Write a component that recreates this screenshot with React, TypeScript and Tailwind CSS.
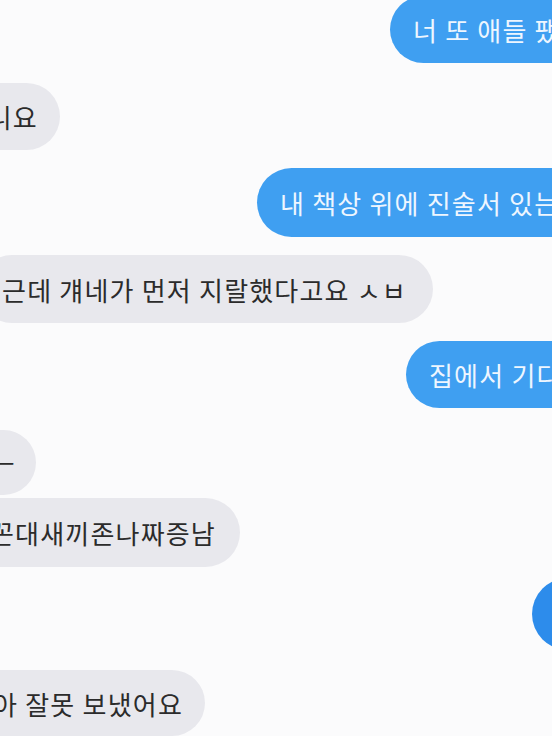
import React from "react";

const font = { fontFamily: '"Noto Sans CJK KR", "Noto Sans", sans-serif' };

const Sent = ({ left, mt, h, text }: { left: string; mt: string; h: string; text: string }) => (
    <div className={`flex ${left} ${mt}`}>
        <div className={`shrink-0 ${h} flex items-center rounded-full bg-[#3f9ff1] pl-[23px] pr-10 whitespace-nowrap text-[26px] tracking-[1.2px] text-[#eef6ff]`}>
            {text}
        </div>
    </div>
);

const Received = ({ right, mt, h, pr, text }: { right: string; mt: string; h: string; pr: string; text: string }) => (
    <div className={`flex justify-end ${right} ${mt}`}>
        <div className={`shrink-0 ${h} ${pr} flex items-center rounded-full bg-[#e8e8ed] pl-6 whitespace-nowrap text-[26px] tracking-[1.2px] text-[#2b2b2b]`}>
            {text}
        </div>
    </div>
);

export default function App() {
    return (
        <div className="w-[552px] h-[736px] overflow-hidden bg-[#fbfbfc] flex flex-col" style={font}>
            <Sent left="pl-[390px]" mt="mt-[-4px]" h="h-[67px]" text="너 또 애들 팼어?" />
            <Received right="w-[60px]" mt="mt-[20px]" h="h-[67px]" pr="pr-[22px]" text="아니요" />
            <Sent left="pl-[257px]" mt="mt-[18px]" h="h-[69px]" text="내 책상 위에 진술서 있는데" />
            <Received right="w-[433px]" mt="mt-[18px]" h="h-[68px]" pr="pr-[26px]" text="근데 걔네가 먼저 지랄했다고요 ㅅㅂ" />
            <Sent left="pl-[406px]" mt="mt-[18px]" h="h-[67px]" text="집에서 기다려" />
            <Received right="w-[36px]" mt="mt-[22px]" h="h-[65px]" pr="pr-[20px]" text="ㅡㅡ" />
            <Received right="w-[240px]" mt="mt-[3px]" h="h-[69px]" pr="pr-[24px]" text="꼰대새끼존나짜증남" />
            <div className="flex pl-[532px] mt-[11px]">
                <div className="shrink-0 w-[80px] h-[72px] rounded-full bg-[#2d8ceb]" />
            </div>
            <Received right="w-[205px]" mt="mt-[20px]" h="h-[66px]" pr="pr-[22px]" text="아 잘못 보냈어요" />
        </div>
    );
}
